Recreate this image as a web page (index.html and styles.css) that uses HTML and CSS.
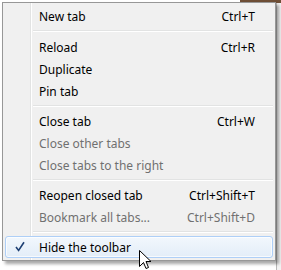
FILE: index.html
```html
<!DOCTYPE html>
<html lang="en">
<head>
    <meta charset="UTF-8">
    <title>Tab context menu</title>
    <link rel="stylesheet" href="styles.css">
</head>
<body>
    <div class="page">
        <div class="top-strip"></div>
        <div class="menu">
            <div class="item"><span class="label">New tab</span><span class="key">Ctrl+T</span></div>
            <div class="sep first"></div>
            <div class="item"><span class="label">Reload</span><span class="key">Ctrl+R</span></div>
            <div class="item"><span class="label">Duplicate</span></div>
            <div class="item"><span class="label">Pin tab</span></div>
            <div class="sep"></div>
            <div class="item"><span class="label">Close tab</span><span class="key">Ctrl+W</span></div>
            <div class="item disabled"><span class="label">Close other tabs</span></div>
            <div class="item disabled"><span class="label">Close tabs to the right</span></div>
            <div class="sep"></div>
            <div class="item"><span class="label">Reopen closed tab</span><span class="key">Ctrl+Shift+T</span></div>
            <div class="item disabled"><span class="label">Bookmark all tabs...</span><span class="key">Ctrl+Shift+D</span></div>
            <div class="sep"></div>
            <div class="item hover">
                <svg class="check" width="10" height="11" viewBox="0 0 10 11">
                    <path d="M1 6 L3.6 9.4 L9 1.2" fill="none" stroke="#1d3f73" stroke-width="1.6"/>
                </svg>
                <span class="label">Hide the toolbar</span>
            </div>
        </div>
        <svg class="cursor" width="13" height="21" viewBox="0 0 13 21">
            <path d="M0.5 0.5 L0.5 16.5 L4.5 12.5 L7 18.5 L9.5 17.5 L7 11.5 L12 11.5 Z" fill="#fff" stroke="#000" stroke-width="1"/>
        </svg>
    </div>
</body>
</html>
```

FILE: styles.css
```css
body {
    margin: 0;
    background-color: #fafafa;
    font-family: "Noto Sans", "Open Sans", sans-serif;
    font-size: 12px;
    color: #000;
}
.page {
    position: relative;
    width: 281px;
    height: 270px;
    overflow: hidden;
    background: linear-gradient(to right, #fff 0, #fff 276px, #b8b8b8 276px, #b8b8b8 277px, #f2f2f2 277px);
}
.top-strip {
    position: absolute;
    top: 0;
    left: 240px;
    width: 41px;
    height: 3px;
    background-color: #6e4e36;
}
.menu {
    position: relative;
    margin: 2px 0 0 2px;
    width: 268px;
    padding: 2px;
    border: 1px solid #979797;
    background-color: #f0f0f0;
    background-image: linear-gradient(to right, transparent 27px, #e2e3e3 27px, #e2e3e3 28px, #fff 28px, #fff 29px, transparent 29px);
    box-shadow: 3px 3px 3px rgba(0, 0, 0, 0.35);
}
.item {
    position: relative;
    display: flex;
    align-items: center;
    height: 22px;
    padding: 0 17px 0 33px;
    box-sizing: border-box;
    border: 1px solid transparent;
    border-radius: 3px;
}
.label {
    flex: 1;
    white-space: nowrap;
}
.key {
    white-space: nowrap;
}
.disabled {
    color: #707070;
}
.hover {
    border-color: #aecff7;
    background: linear-gradient(to bottom, #f2f7fd, #e3edf8);
    box-shadow: inset 0 0 0 1px rgba(255, 255, 255, 0.7);
}
.check {
    position: absolute;
    left: 9px;
    top: 4px;
}
.sep {
    height: 8px;
    margin-left: 28px;
    background: linear-gradient(to bottom, transparent 3px, #e2e3e3 3px, #e2e3e3 4px, #fff 4px, #fff 5px, transparent 5px);
}
.sep.first {
    height: 9px;
}
.cursor {
    position: absolute;
    left: 139px;
    top: 250px;
}
```
